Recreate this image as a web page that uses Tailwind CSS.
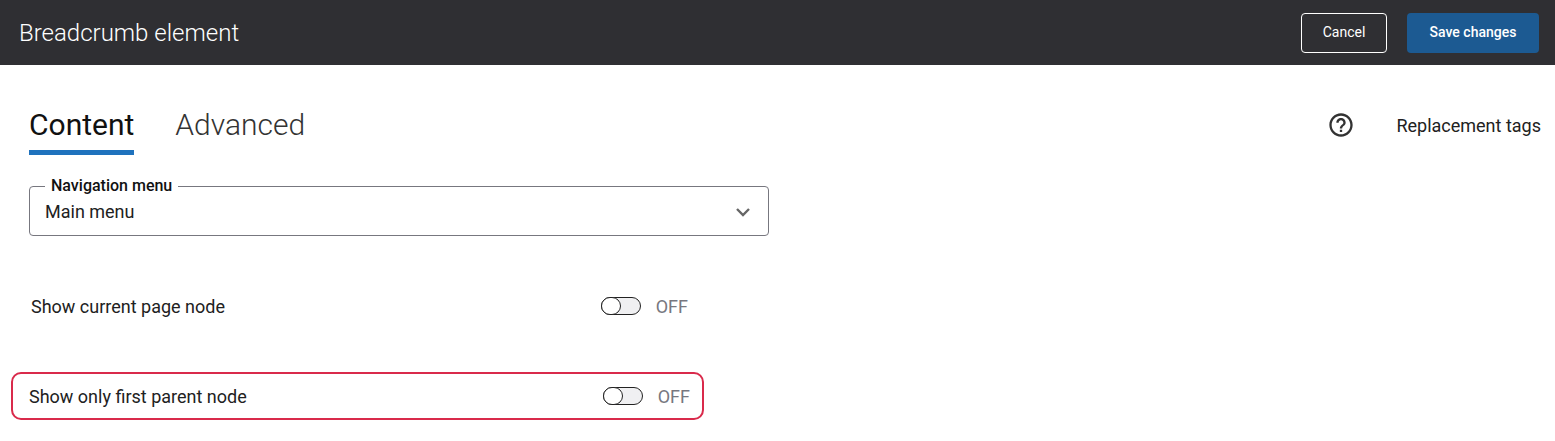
<!DOCTYPE html>
<html lang="en">
<head>
<meta charset="utf-8">
<script src="https://cdn.jsdelivr.net/npm/@tailwindcss/browser@4"></script>
<title>Breadcrumb element</title>
</head>
<body class="bg-white font-['Roboto',sans-serif] text-[#212121] overflow-hidden">
<div class="h-[441px] w-[1555px] overflow-hidden">
  <header class="h-[65px] bg-[#2f2f33] flex items-center justify-between pl-[19px] pr-4">
    <h1 class="text-[24px] font-light text-white leading-none">Breadcrumb element</h1>
    <div class="flex items-center gap-5">
      <button class="h-10 w-[86px] rounded-[4px] border border-white text-white text-[14px] font-normal">Cancel</button>
      <button class="h-10 w-[132px] rounded-[4px] bg-[#1c5a92] text-white text-[14px] font-medium">Save changes</button>
    </div>
  </header>
  <div class="flex items-start justify-between pl-[29px] pr-[14px] pt-[38px]">
    <div class="flex gap-[41px]">
      <div class="h-[52px] border-b-[5px] border-[#1f72bd] text-[30px] leading-[44px] text-[#111]">Content</div>
      <div class="h-[52px] text-[30px] leading-[44px] font-light text-[#333]">Advanced</div>
    </div>
    <div class="flex items-center gap-[41px] h-11">
      <svg class="w-[28px] h-[28px] text-[#333]" viewBox="0 0 24 24" fill="currentColor"><path d="M11 18h2v-2h-2v2zm1-16C6.48 2 2 6.48 2 12s4.48 10 10 10 10-4.48 10-10S17.52 2 12 2zm0 18c-4.41 0-8-3.59-8-8s3.59-8 8-8 8 3.59 8 8-3.59 8-8 8zm0-14c-2.21 0-4 1.79-4 4h2c0-1.1.9-2 2-2s2 .9 2 2c0 2-3 1.75-3 5h2c0-2.25 3-2.5 3-5 0-2.21-1.79-4-4-4z"/></svg>
      <span class="text-[18px] text-[#212121]">Replacement tags</span>
    </div>
  </div>
  <div class="pl-[29px] pt-[31px]">
    <fieldset class="w-[740px] h-[59px] -mt-[9px] border border-[#77777f] rounded-[4px] pl-[15px] pr-[17px] flex items-center justify-between relative">
      <legend class="px-[6px] text-[16px] font-medium leading-[18px] text-[#111]">Navigation menu</legend>
      <span class="text-[18px] leading-6 -mt-[6px]">Main menu</span>
      <svg class="w-4 h-4 -mt-[6px] text-[#666]" viewBox="0 0 16 16" fill="none" stroke="currentColor" stroke-width="2.4"><path d="M2 5l6 6 6-6"/></svg>
    </fieldset>
  </div>
  <div class="ml-[11px] mt-[46px] w-[693px] h-[48px] pl-[18px] pr-[14px] flex items-center justify-between border-2 border-transparent">
    <span class="text-[18px]">Show current page node</span>
    <div class="flex items-center gap-[15px]">
      <div class="relative w-[40px] h-[18px] rounded-full border border-[#222] bg-[#f0f0f2]"><div class="absolute -left-px -top-px w-[20px] h-[18px] rounded-full border border-[#222] bg-white"></div></div>
      <span class="text-[18px] text-[#77777f]">OFF</span>
    </div>
  </div>
  <div class="ml-[11px] mt-[42px] w-[693px] h-[48px] pl-[16px] pr-[12px] flex items-center justify-between border-2 border-[#d92a4b] rounded-[10px]">
    <span class="text-[18px]">Show only first parent node</span>
    <div class="flex items-center gap-[15px]">
      <div class="relative w-[40px] h-[18px] rounded-full border border-[#222] bg-[#f0f0f2]"><div class="absolute -left-px -top-px w-[20px] h-[18px] rounded-full border border-[#222] bg-white"></div></div>
      <span class="text-[18px] text-[#77777f]">OFF</span>
    </div>
  </div>
</div>
</body>
</html>
